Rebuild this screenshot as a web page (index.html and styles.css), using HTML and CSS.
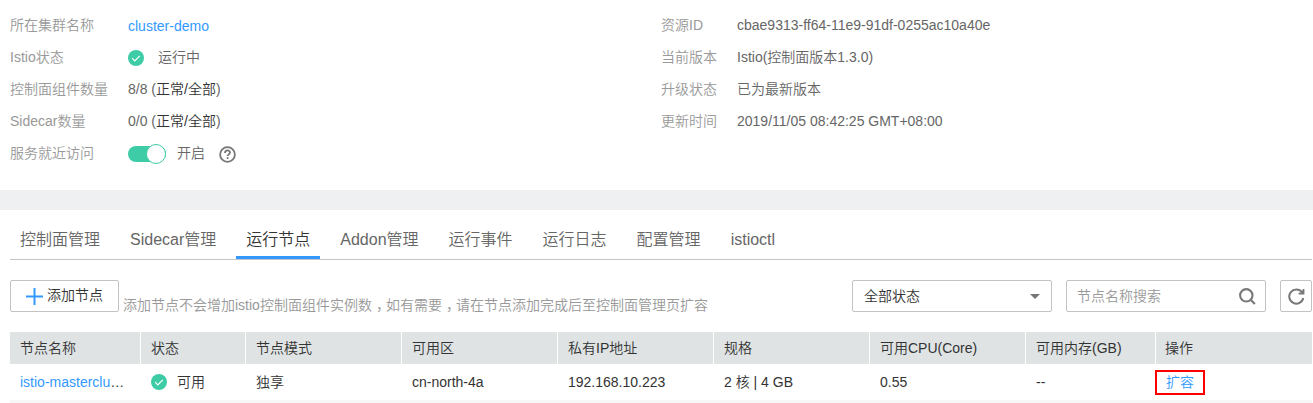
FILE: index.html
```html
<!DOCTYPE html>
<html lang="zh-CN">
<head>
<meta charset="utf-8">
<title>cluster-demo</title>
<link rel="stylesheet" href="styles.css">
</head>
<body>
<section class="summary">
  <dl class="info info-left">
    <dt>所在集群名称</dt><dd class="name"><a class="link">cluster-demo</a></dd>
    <dt>Istio状态</dt>
    <dd><svg class="ok" viewBox="0 0 16 16"><circle cx="8" cy="8" r="8"/><path d="M4.2 8.2l2.6 2.6 5-5"/></svg><span class="status">运行中</span></dd>
    <dt>控制面组件数量</dt><dd><span>8/8 (<span class="strong">正常/全部</span>)</span></dd>
    <dt>Sidecar数量</dt><dd><span>0/0 (<span class="strong">正常/全部</span>)</span></dd>
    <dt>服务就近访问</dt>
    <dd><span class="switch"><span class="knob"></span></span><span class="switch-text">开启</span>
      <svg class="help" viewBox="0 0 17 17"><circle cx="8.5" cy="8.5" r="7.4"/><path d="M6 6.9c0-3.2 5-3.2 5-.3 0 1.7-2.4 1.8-2.4 3.5M8.6 11.3v1.8"/></svg></dd>
  </dl>
  <dl class="info info-right">
    <dt>资源ID</dt><dd>cbae9313-ff64-11e9-91df-0255ac10a40e</dd>
    <dt>当前版本</dt><dd>Istio(控制面版本1.3.0)</dd>
    <dt>升级状态</dt><dd>已为最新版本</dd>
    <dt>更新时间</dt><dd>2019/11/05 08:42:25 GMT+08:00</dd>
  </dl>
</section>
<main class="panel">
  <nav class="tabs">
    <a class="tab">控制面管理</a>
    <a class="tab">Sidecar管理</a>
    <a class="tab active">运行节点</a>
    <a class="tab">Addon管理</a>
    <a class="tab">运行事件</a>
    <a class="tab">运行日志</a>
    <a class="tab">配置管理</a>
    <a class="tab">istioctl</a>
  </nav>
  <div class="toolbar">
    <button class="box add"><svg class="plus" viewBox="0 0 17 17"><path d="M8.5 0v17M0 8.5h17"/></svg><span>添加节点</span></button>
    <span class="hint">添加节点不会增加istio控制面组件实例数<span class="comma">，</span>如有需要<span class="comma">，</span>请在节点添加完成后至控制面管理页扩容</span>
    <div class="box select"><span>全部状态</span><span class="caret"></span></div>
    <div class="box search"><span>节点名称搜索</span><svg class="lens" viewBox="0 0 17 17"><circle cx="7.3" cy="7.3" r="6.2"/><path d="M11.7 11.7l4.2 4.2"/></svg></div>
    <button class="box refresh"><svg viewBox="0 0 17 17"><path class="arc" d="M14 4.2A7.1 7.1 0 1 0 15.3 10"/><path class="tip" d="M16.4 1v5.6h-5.8v-1.8l3.2-.6 1-3.2z"/></svg></button>
  </div>
  <table class="nodes">
    <colgroup><col class="c-name"><col class="c-state"><col class="c-std"><col class="c-std"><col class="c-std"><col class="c-std"><col class="c-std"><col class="c-mem"><col class="c-std"></colgroup>
    <thead><tr><th>节点名称</th><th>状态</th><th>节点模式</th><th>可用区</th><th>私有IP地址</th><th>规格</th><th>可用CPU(Core)</th><th>可用内存(GB)</th><th>操作</th></tr></thead>
    <tbody><tr>
      <td><a class="link">istio-masterclu</a>…</td>
      <td><div class="cell-status"><svg class="ok" viewBox="0 0 16 16"><circle cx="8" cy="8" r="8"/><path d="M4.2 8.2l2.6 2.6 5-5"/></svg>可用</div></td>
      <td>独享</td><td>cn-north-4a</td><td>192.168.10.223</td><td>2 核 | 4 GB</td><td>0.55</td><td>--</td>
      <td class="action"><a class="link marked">扩容</a></td>
    </tr></tbody>
  </table>
</main>
</body>
</html>
```
FILE: styles.css
```css
* { box-sizing: border-box; }
body {
  margin: 0;
  height: 403px;
  overflow: hidden;
  background: #fff;
  color: #333;
  font: 350 14px/20px "Liberation Sans", "Noto Sans CJK SC", sans-serif;
  white-space: nowrap;
}
.link { color: #3399ff; }
.strong { color: #333; }
.summary { display: flex; height: 210px; padding: 10px; border-bottom: 20px solid #eff0f2; }
.info { display: grid; grid-auto-rows: 32px; align-content: start; margin: 0; color: #666; }
.info-left { grid-template-columns: 118px 533px; }
.info-right { grid-template-columns: 76px auto; }
.info dt { color: #999; line-height: 31px; }
.info dd { display: flex; align-items: center; margin: 0; line-height: 30px; }
.info dd > span:not(.switch) { line-height: 28px; padding-bottom: 2px; }
.info-right dd { align-items: flex-start; }
.ok { display: block; width: 16px; height: 16px; }
.ok circle { fill: #3dcca6; }
.ok path { fill: none; stroke: #fff; stroke-width: 1.2; }
.status { margin-left: 14px; }
.switch { display: flex; justify-content: flex-end; align-items: center; width: 38px; height: 16px; border-radius: 8px; background: #3dcca6; }
.knob { flex: none; width: 20px; height: 20px; border: 1px solid #3dcca6; border-radius: 50%; background: #fff; }
.switch-text { margin: 0 14px 0 11px; }
.help { width: 17px; height: 17px; fill: none; stroke: #777; stroke-width: 1.8; }
.panel { padding: 0 1px 0 10px; }
.tabs { display: flex; gap: 10px; height: 50px; border-bottom: 1px solid #c3c5c6; color: #666; font-size: 16px; }
.tab { height: 49px; padding: 0 10px; line-height: 59px; }
.tab.active { color: #333; border-bottom: 3px solid #3399ff; }
.toolbar { display: flex; height: 32px; margin: 20px 0; }
.box { display: flex; align-items: center; height: 32px; border: 1px solid #c3c3c3; border-radius: 2px; background: #fff; color: #333; font: inherit; line-height: 30px; }
.add { width: 109px; padding: 0 0 0 15px; gap: 4px; }
.add span { padding-bottom: 2px; line-height: 28px; }
.plus { width: 17px; height: 17px; margin-top: 1px; stroke: #3399ff; stroke-width: 2; }
.hint { margin-left: 4px; padding-top: 15px; color: #999; }
.comma { margin: 0 3px 0 4px; font-feature-settings: "halt"; }
.select { width: 200px; margin-left: auto; padding: 0 11px; justify-content: space-between; }
.caret { border: 5px solid transparent; border-top-color: #777; border-bottom: 0; }
.search { width: 200px; margin-left: 14px; padding: 0 9px 0 10px; justify-content: space-between; color: #999; }
.lens { width: 17px; height: 17px; fill: none; stroke: #777; stroke-width: 2.1; }
.refresh { width: 32px; margin-left: 14px; padding: 0; justify-content: center; }
.refresh svg { width: 17px; height: 17px; }
.arc { fill: none; stroke: #777; stroke-width: 2; }
.tip { fill: #777; }
.nodes { width: 1302px; table-layout: fixed; border-collapse: separate; border-spacing: 0; }
.c-name { width: 131px; }
.c-state { width: 105px; }
.c-std { width: 156px; }
.c-mem { width: 130px; }
.nodes th { height: 32px; padding: 0 10px; border-right: 1px solid #fff; background: #dfe3e4; font-weight: 350; text-align: left; line-height: 32px; }
.nodes th:last-child { border-right: 0; padding-left: 9px; }
.nodes td { height: 39px; padding: 0 10px; border-bottom: 3px solid #f7f7f8; line-height: 36px; }
.cell-status { display: flex; align-items: center; gap: 10px; }
.nodes td.action { padding-left: 0; }
.marked { display: block; width: 50px; height: 25px; margin-left: -1px; border: 2px solid #f00; padding-left: 9px; line-height: 21px; }
```
